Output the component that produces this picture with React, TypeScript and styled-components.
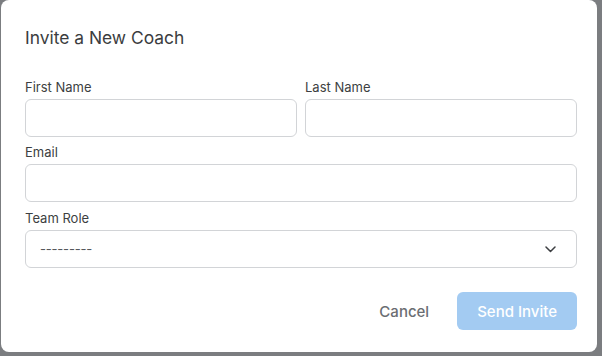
import React from "react";
import styled, { createGlobalStyle } from "styled-components";

const Global = createGlobalStyle`
  html, body { margin: 0; padding: 0; }
  body {
    background: #7b7d80;
    font-family: Inter, "Noto Sans", "Liberation Sans", sans-serif;
    width: 602px;
    height: 356px;
    overflow: hidden;
  }
`;

const Backdrop = styled.div`
  width: 602px;
  height: 356px;
  display: flex;
  align-items: flex-start;
  padding-left: 1px;
  box-sizing: border-box;
`;

const Modal = styled.div`
  width: 596px;
  height: 352px;
  background: #ffffff;
  border-radius: 8px;
  box-sizing: border-box;
  padding: 26px 20px 22px 24px;
  display: flex;
  flex-direction: column;
`;

const Title = styled.h2`
  margin: 0;
  font-size: 17.4px;
  line-height: 24px;
  font-weight: 400;
  color: #3b3d40;
`;

const Form = styled.div`
  margin-top: 29px;
  display: flex;
  flex-direction: column;
  gap: 7px;
`;

const Row = styled.div`
  display: grid;
  grid-template-columns: 1fr 1fr;
  gap: 8px;
`;

const Field = styled.div<{ $extraTop?: boolean }>`
  display: flex;
  flex-direction: column;
  margin-top: ${(p) => (p.$extraTop ? "1px" : "0")};
`;

const Label = styled.label`
  font-size: 13px;
  line-height: 16px;
  color: #3d3f42;
  margin-bottom: 4px;
`;

const Input = styled.input`
  height: 38px;
  box-sizing: border-box;
  border: 1px solid #d2d4d7;
  border-radius: 6px;
  padding: 0 14px;
  font-family: inherit;
  font-size: 14px;
  outline: none;
  background: #fff;
`;

const Select = styled.div`
  height: 38px;
  box-sizing: border-box;
  border: 1px solid #d2d4d7;
  border-radius: 6px;
  padding: 0 20px 0 14px;
  display: flex;
  align-items: center;
  justify-content: space-between;
  font-size: 13px;
  letter-spacing: -0.2px;
  color: #55585c;
`;

const Footer = styled.div`
  margin-top: 24px;
  display: flex;
  justify-content: flex-end;
  align-items: center;
  gap: 8px;
`;

const Button = styled.button<{ $primary?: boolean }>`
  height: 38px;
  border: none;
  border-radius: 6px;
  padding: 0 20px;
  font-family: inherit;
  font-size: 15px;
  font-weight: 500;
  cursor: pointer;
  background: ${(p) => (p.$primary ? "#a3cbf2" : "transparent")};
  color: ${(p) => (p.$primary ? "#ffffff" : "#6a6d72")};
`;

export default function App() {
  return (
    <>
      <Global />
      <Backdrop>
        <Modal>
          <Title>Invite a New Coach</Title>
          <Form>
            <Row>
              <Field>
                <Label>First Name</Label>
                <Input />
              </Field>
              <Field>
                <Label>Last Name</Label>
                <Input />
              </Field>
            </Row>
            <Field>
              <Label>Email</Label>
              <Input />
            </Field>
            <Field $extraTop>
              <Label>Team Role</Label>
              <Select>
                <span>---------</span>
                <svg width="11" height="7" viewBox="0 0 11 7" fill="none">
                  <path d="M1 1l4.5 4.5L10 1" stroke="#3d3f42" strokeWidth="1.5" strokeLinecap="round" strokeLinejoin="round" />
                </svg>
              </Select>
            </Field>
          </Form>
          <Footer>
            <Button>Cancel</Button>
            <Button $primary>Send Invite</Button>
          </Footer>
        </Modal>
      </Backdrop>
    </>
  );
}
